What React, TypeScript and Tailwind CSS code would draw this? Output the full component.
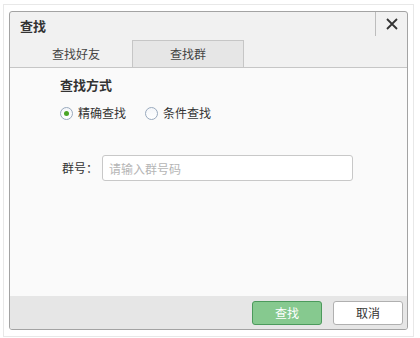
import { useState } from "react";

const FONT = { fontFamily: '"Noto Sans CJK SC", "Liberation Sans", sans-serif' };

function Radio({ checked, label, onClick }: { checked: boolean; label: string; onClick: () => void }) {
  return (
    <button type="button" onClick={onClick} className="flex items-center gap-[5px] text-[12px] text-[#333]">
      <span className="flex h-[13px] w-[13px] items-center justify-center rounded-full border border-[#98a9bd] bg-gradient-to-b from-[#f4f6f9] to-white">
        {checked && <span className="h-[5px] w-[5px] rounded-full bg-[#4aa526]" />}
      </span>
      <span>{label}</span>
    </button>
  );
}

export default function App() {
  const [tab, setTab] = useState(1);
  const [mode, setMode] = useState(0);

  return (
    <div className="h-[338px] w-[420px] bg-white pl-[3px] pt-[4px]" style={FONT}>
      <div className="h-[333px] w-[411px] border border-[#e8e8e8] pl-[5px] pt-[6px]">
        <div className="flex h-[319px] w-[399px] flex-col overflow-hidden rounded-[3px] border border-[#a3a3a3] bg-[#f1f1f1]">
          {/* Title */}
          <div className="flex h-[28px] items-start justify-between">
            <span className="pl-[10px] pt-[5px] text-[13px] leading-[18px] font-bold text-[#333]">查找</span>
            <button type="button" className="flex h-[24px] w-[32px] items-center justify-center border-l border-[#bdbdbd]">
              <svg width="12" height="12" viewBox="0 0 12 12">
                <path d="M1 1L11 11M11 1L1 11" stroke="#333" strokeWidth="1.8" />
              </svg>
            </button>
          </div>

          {/* Tabs */}
          <div className="flex h-[28px] border-b border-[#c6c6c6] pl-[10px]">
            {["查找好友", "查找群"].map((t, i) => (
              <button
                key={t}
                type="button"
                onClick={() => setTab(i)}
                className={
                  tab === i
                    ? "w-[112px] border-x border-t border-[#c6c6c6] bg-[#e6e6e6] text-[12px] text-[#444]"
                    : "w-[112px] border-x border-t border-transparent text-[12px] text-[#444]"
                }
              >
                {t}
              </button>
            ))}
          </div>

          {/* Body */}
          <div className="flex-1 bg-[#fafafa] pl-[50px] pt-[8px]">
            <div className="text-[13px] leading-[18px] font-bold text-[#333]">查找方式</div>
            <div className="mt-[10px] flex gap-[19px]">
              <Radio checked={mode === 0} label="精确查找" onClick={() => setMode(0)} />
              <Radio checked={mode === 1} label="条件查找" onClick={() => setMode(1)} />
            </div>
            <div className="mt-[33px] flex items-center">
              <span className="w-[42px] pl-[2px] text-[12px] text-[#333]">群号：</span>
              <input
                placeholder="请输入群号码"
                className="h-[26px] w-[251px] rounded-[3px] border border-[#c8c8c8] bg-white px-[6px] text-[12px] text-[#333] placeholder-[#b5b5b5] outline-none"
                style={FONT}
              />
            </div>
          </div>

          {/* Footer */}
          <div className="flex h-[33px] items-center justify-end gap-[11px] bg-[#e6e6e6] pr-[4px]">
            <button
              type="button"
              className="h-[24px] w-[70px] rounded-[3px] border border-[#4c9a5c] bg-[#86c98f] text-[12px] text-white"
            >
              查找
            </button>
            <button
              type="button"
              className="h-[24px] w-[70px] rounded-[3px] border border-[#b0b0b0] bg-white text-[12px] text-[#333]"
            >
              取消
            </button>
          </div>
        </div>
      </div>
    </div>
  );
}
